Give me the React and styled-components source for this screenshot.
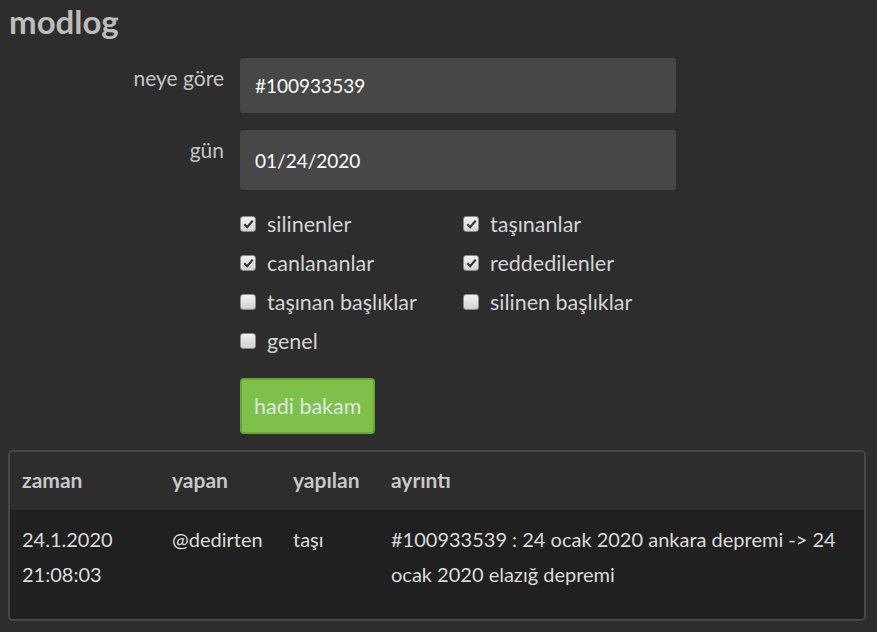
import React from "react";
import styled, { createGlobalStyle } from "styled-components";

const Global = createGlobalStyle`
	body {
		margin: 0;
		background: #2d2d2d;
		font-family: Lato, "Open Sans", sans-serif;
		color: #d8d8d8;
	}
`;

const Page = styled.div`
	padding: 0 11px 0 8px;
`;

const Title = styled.h1`
	margin: 0;
	padding: 1px 0 0 1px;
	height: 50px;
	font-size: 33px;
	font-weight: 700;
	color: #bcbcbc;
`;

const Form = styled.form`
	display: grid;
	grid-template-columns: 216px 436px;
	column-gap: 16px;
	row-gap: 17px;
	margin-top: 7px;
`;

const Label = styled.label`
	text-align: right;
	padding-top: 7px;
	font-size: 21px;
	color: #c4c4c4;
`;

const Input = styled.input`
	box-sizing: border-box;
	width: 100%;
	height: ${(p) => p.h}px;
	border: none;
	border-radius: 3px;
	background: #474747;
	color: #fff;
	font-family: inherit;
	font-size: 19px;
	padding: 0 15px;
	outline: none;
`;

const Options = styled.div`
	grid-column: 2;
	display: grid;
	grid-template-columns: 223px 223px;
	margin-top: -3px;
`;

const Option = styled.label`
	display: flex;
	align-items: center;
	height: 39px;
	font-size: 21.5px;
	color: #d4d4d4;
`;

const Box = styled.span`
	box-sizing: border-box;
	width: 16px;
	height: 16px;
	margin: 0 11px 0 0;
	border: 1px solid #8a8a8a;
	border-radius: 3px;
	background: linear-gradient(#f2f2f2, #d2d2d2);
	display: flex;
	align-items: center;
	justify-content: center;
`;

const Button = styled.button`
	grid-column: 2;
	justify-self: start;
	height: 56px;
	padding: 0 12px;
	margin-top: 1px;
	background: #7fc04b;
	border: 2px solid #6aa53a;
	border-radius: 4px;
	color: #dde8e6;
	font-family: inherit;
	font-size: 21.5px;
`;

const Panel = styled.div`
	margin-top: 16px;
	width: 858px;
	box-sizing: border-box;
	border: 2px solid #474747;
	border-radius: 5px;
	overflow: hidden;
`;

const Row = styled.div`
	display: grid;
	grid-template-columns: 150px 121px 98px 1fr;
	background: ${(p) => (p.head ? "#2d2d2d" : "#202020")};
	padding: ${(p) => (p.head ? "10px 0 13px" : "12px 0 27px")};
	line-height: 35px;
	font-size: ${(p) => (p.head ? "21px" : "20px")};
	font-weight: ${(p) => (p.head ? 700 : 400)};
	color: ${(p) => (p.head ? "#c8c8c8" : "#dcdcdc")};
`;

const Cell = styled.div`
	padding: 0 12px;
`;

function Check({ on }) {
	return (
		<Box>
			{on && (
				<svg width="11" height="10" viewBox="0 0 10 9">
					<path d="M1.2 4.8 L3.8 7.4 L8.8 1.4" fill="none" stroke="#333" strokeWidth="2" />
				</svg>
			)}
		</Box>
	);
}

const options = [
	["silinenler", true],
	["taşınanlar", true],
	["canlananlar", true],
	["reddedilenler", true],
	["taşınan başlıklar", false],
	["silinen başlıklar", false],
	["genel", false],
];

export default function App() {
	return (
		<Page>
			<Global />
			<Title>modlog</Title>
			<Form onSubmit={(e) => e.preventDefault()}>
				<Label>neye göre</Label>
				<Input h={55} defaultValue="#100933539" />
				<Label>gün</Label>
				<Input h={60} defaultValue="01/24/2020" />
				<Options>
					{options.map(([name, on]) => (
						<Option key={name}>
							<Check on={on} />
							{name}
						</Option>
					))}
				</Options>
				<Button>hadi bakam</Button>
			</Form>
			<Panel>
				<Row head>
					<Cell>zaman</Cell>
					<Cell>yapan</Cell>
					<Cell>yapılan</Cell>
					<Cell>ayrıntı</Cell>
				</Row>
				<Row>
					<Cell>24.1.2020 21:08:03</Cell>
					<Cell>@dedirten</Cell>
					<Cell>taşı</Cell>
					<Cell>#100933539 : 24 ocak 2020 ankara depremi -&gt; 24 ocak 2020 elazığ depremi</Cell>
				</Row>
			</Panel>
		</Page>
	);
}
